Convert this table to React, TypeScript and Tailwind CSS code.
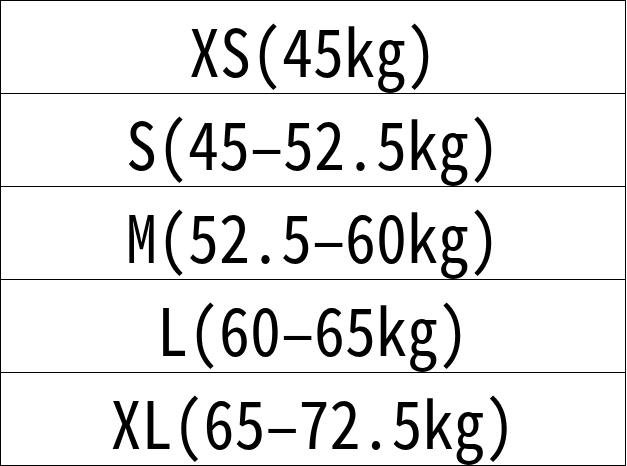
const sizes = ['XS(45kg)', 'S(45–52.5kg)', 'M(52.5–60kg)', 'L(60–65kg)', 'XL(65–72.5kg)'];

export default function App() {
  return (
    <div className="w-[627px] h-[466px] bg-white">
      <div className="w-[626px] h-[466px] border-x border-b border-black flex flex-col">
        {sizes.map((s) => (
          <div
            key={s}
            className="h-[93px] shrink-0 border-t border-black flex items-center justify-center pt-[2px] text-[62px] leading-none text-black whitespace-pre"
            style={{ fontFamily: '"Noto Sans Mono CJK SC", "Noto Sans CJK SC", monospace' }}
          >
            <span className="inline-block scale-y-[1.06]">{s}</span>
          </div>
        ))}
      </div>
    </div>
  );
}
